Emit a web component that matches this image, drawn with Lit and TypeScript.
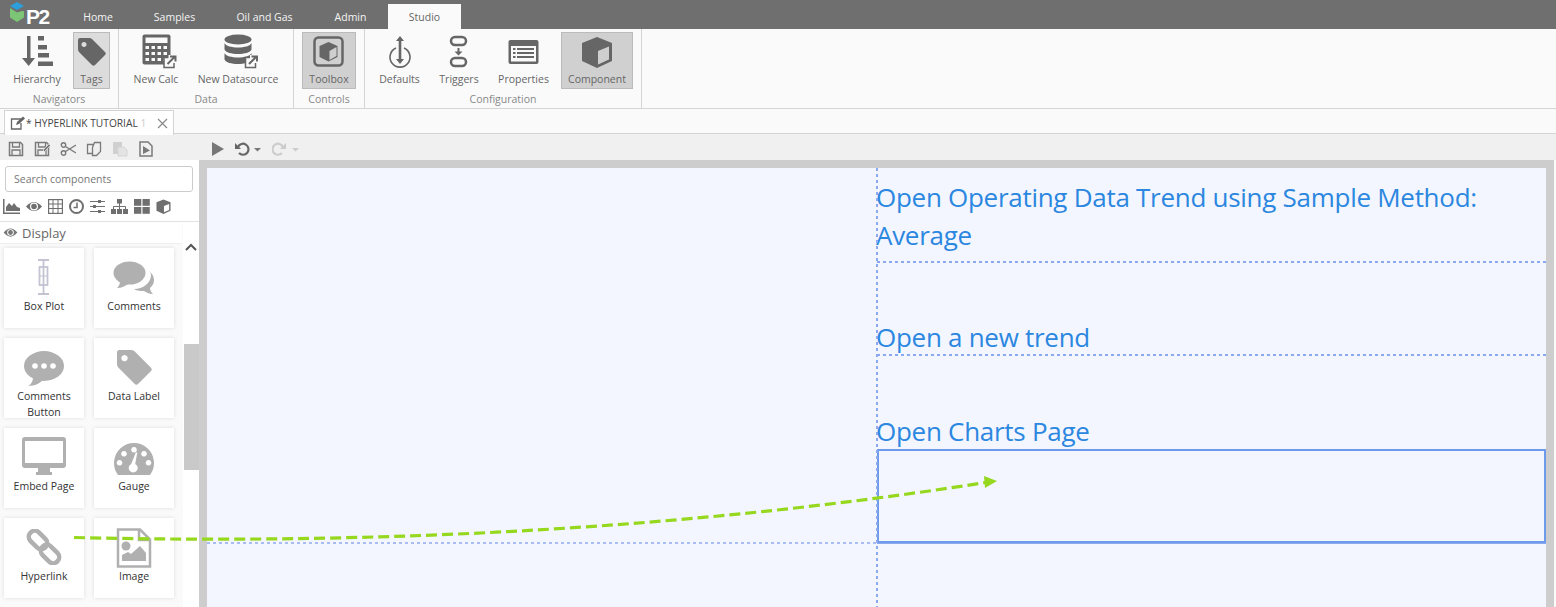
import { LitElement, html, css, svg } from "lit";
import { customElement } from "lit/decorators.js";

const I = (w: number, h: number, body: unknown, cls = "") =>
  html`<svg class=${cls} width=${w} height=${h} viewBox="0 0 ${w} ${h}">${body}</svg>`;

const G = "#666";
const R = "#b0b0b0";

const hierarchy = I(36, 34, svg`
  <path d="M8 1h3.500v22H16l-6.300 8-6.700-8H8z" fill="${G}"/>
  <rect x="19" y="1" width="6" height="4.500" fill="${G}"/><rect x="19" y="10" width="9" height="4.500" fill="${G}"/>
  <rect x="19" y="18" width="11" height="4.500" fill="${G}"/><rect x="19" y="26.500" width="15" height="4.500" fill="${G}"/>`);
const tag = (c: string, w = 28) => html`<svg width=${w} height=${w} viewBox="0 0 28 28">
  <path fill-rule="evenodd" fill="${c}" d="M2 0h9q2 0 3 1l13 13q1.500 1.500 0 3l-10 10q-1.500 1.500-3 0L1 14Q0 13 0 11V2q0-2 2-2zM6 4a2.500 2.500 0 1 0 .01 0z"/></svg>`;
const extLink = svg`
  <rect x="21.500" y="23.500" width="10" height="10" fill="#fafafa" stroke="${G}" stroke-width="1.500"/>
  <rect x="26" y="21" width="8" height="8" fill="#fafafa"/>
  <path d="M25 30l7-7M27.500 22.500h5.500v5" fill="none" stroke="${G}" stroke-width="2"/>`;
const calc = html`<svg width="42" height="35" viewBox="-7.500 0 42 35">
  <rect x="0" y="0.500" width="28" height="30" rx="2" fill="${G}"/>
  <rect x="3" y="3.500" width="22" height="5.500" fill="#fafafa"/>
  ${[12, 18, 24].map(y => [3, 9, 15, 21].map(x => svg`<rect x="${x}" y="${y}" width="3.500" height="3" fill="#fafafa"/>`))}
  ${extLink}</svg>`;
const db = html`<svg width="42" height="35" viewBox="-7 0 42 35">
  <ellipse cx="14" cy="5.500" rx="13.500" ry="5" fill="${G}"/>
  <path d="M0.500 9c2 6 25 6 27 0v6.500c-2 6-25 6-27 0zM0.500 19c2 6 25 6 27 0v6.500c-2 6-25 6-27 0z" fill="${G}"/>
  ${extLink}</svg>`;
const toolboxIco = I(32, 32, svg`
  <rect x="1.500" y="1.500" width="28" height="28" rx="4" fill="none" stroke="${G}" stroke-width="2.500"/>
  <path d="M15.500 6l9 4v11l-9 4.500-9-4.500V10z" fill="${G}"/>
  <path d="M16.500 15v9l7-4V11z" fill="#cfcfcf"/>`);
const defaults = I(24, 34, svg`
  <path d="M12 1l4 5h-2.700v18H16l-4 5-4-5h2.700V6H8z" fill="${G}"/>
  <path d="M8 13a10 10 0 1 0 8 0" fill="none" stroke="${G}" stroke-width="1.600"/>`);
const triggers = I(20, 34, svg`
  <rect x="2" y="2" width="15" height="8" rx="4" fill="none" stroke="${G}" stroke-width="2.500"/>
  <rect x="2" y="23" width="15" height="8" rx="4" fill="none" stroke="${G}" stroke-width="2.500"/>
  <path d="M8.500 13h2v3.500h3L9.500 20.500l-4-4h3z" fill="${G}"/>`);
const props = I(32, 26, svg`
  <rect x="0.500" y="1" width="30" height="24" rx="2" fill="${G}"/>
  <rect x="3" y="7" width="25" height="15.500" fill="#fafafa"/>
  ${[9, 13, 17].map(y => svg`<rect x="5" y="${y}" width="2.500" height="2" fill="${G}"/><rect x="9" y="${y}" width="17" height="2" fill="${G}"/>`)}`);
const cube = (c: string, face: string, s = 32) => html`<svg width=${s} height=${s} viewBox="0 0 32 32">
  <path d="M16 1l15 6v18l-15 7-15-7V7z" fill="${c}"/>
  <path d="M17 15l11-4.500v13L17 28.500z" fill="${face}"/></svg>`;

const btns = {
  nav: [
    { l: "Hierarchy", w: 66, i: hierarchy },
    { l: "Tags", w: 37, i: tag(G), a: "lite", m: 3 },
  ],
  data: [
    { l: "New Calc", w: 66, i: calc },
    { l: "New Datasource", w: 94, i: db, m: 2 },
  ],
  ctl: [{ l: "Toolbox", w: 54, i: toolboxIco, a: "active" }],
  cfg: [
    { l: "Defaults", w: 55, i: defaults },
    { l: "Triggers", w: 64, i: triggers },
    { l: "Properties", w: 65, i: props },
    { l: "Component", w: 72, i: cube(G, "#cfcfcf"), a: "active", m: 5 },
  ],
};

const T = "#7a7a7a";
const tool = (b: unknown) => I(16, 16, b);
const saveI = svg`<path d="M1.500 1.500h11l2 2v11h-13z" fill="none" stroke="${T}" stroke-width="1.500"/><path d="M4.500 2v4h7V2M4 14v-5h8v5" fill="none" stroke="${T}" stroke-width="1.300"/>`;
const leftTools = [
  tool(saveI),
  tool(svg`${saveI}<path d="M9 9l6-6 1.500 1.500-6 6z" fill="${T}" stroke="#f0f0f0" stroke-width=".6"/>`),
  tool(svg`<circle cx="3.500" cy="4" r="2.200" fill="none" stroke="${T}" stroke-width="1.400"/><circle cx="3.500" cy="12" r="2.200" fill="none" stroke="${T}" stroke-width="1.400"/><path d="M5.500 5.500L16 12M5.500 10.500L16 4" stroke="${T}" stroke-width="1.400"/>`),
  tool(svg`<path d="M1.500 3.500h7v9h-7z" fill="none" stroke="${T}" stroke-width="1.300"/><path d="M6.500 6.500l2-5h6v9l-4 4h-4z" fill="#f0f0f0" stroke="${T}" stroke-width="1.300"/>`),
  tool(svg`<path d="M1 1h9v12H1z" fill="#d0d0d0"/><path d="M6 6h6l3 3v6H6z" fill="#e4e4e4" stroke="#d4d4d4"/>`),
  tool(svg`<path d="M2 1h8l4 4v10H2z" fill="none" stroke="${T}" stroke-width="1.500"/><path d="M5 5l7 4.500L5 13z" fill="${T}"/>`),
];

const S = "#6f6f6f";
const sideIcons = [
  I(17, 15, svg`<path d="M0 0h1.500v13.500H19V15H0z" fill="${S}"/><path d="M3 12V8l3-4 3 3 2-3 3 4 3 1v3z" fill="${S}"/>`),
  I(16, 15, svg`<path d="M0 7.500Q8-1.500 16 7.500 8 16.500 0 7.500z" fill="${S}"/><circle cx="8" cy="7.500" r="4" fill="#fff"/><circle cx="8" cy="7.500" r="2.800" fill="${S}"/>`),
  I(15, 15, svg`<rect x=".6" y=".6" width="13.800" height="13.800" fill="none" stroke="${S}" stroke-width="1.200"/><path d="M0 5h15M0 9.500h15M5 0v15M10 0v15" stroke="${S}"/>`),
  I(15, 15, svg`<circle cx="7.500" cy="7.500" r="6.500" fill="none" stroke="${S}" stroke-width="2"/><path d="M8 3.500v5H4.500" fill="none" stroke="${S}" stroke-width="1.500"/>`),
  I(15, 15, svg`<path d="M0 2.500h15M0 7.500h15M0 12.500h15" stroke="${S}"/><rect x="8" y="1" width="3" height="3" fill="${S}"/><rect x="3" y="6" width="3" height="3" fill="${S}"/><rect x="8" y="11" width="3" height="3" fill="${S}"/>`),
  I(17, 15, svg`<rect x="6" y="0" width="5" height="4.500" fill="${S}"/><rect x="0" y="10" width="5" height="5" fill="${S}"/><rect x="6" y="10" width="5" height="5" fill="${S}"/><rect x="12" y="10" width="5" height="5" fill="${S}"/><path d="M8.500 4v6M2.500 10V7.500h12V10" fill="none" stroke="${S}"/>`),
  I(16, 15, svg`<rect x="0" y="0" width="7.300" height="6.800" fill="${S}"/><rect x="8.500" y="0" width="7.300" height="6.800" fill="${S}"/><rect x="0" y="8" width="7.300" height="6.800" fill="${S}"/><rect x="8.500" y="8" width="7.300" height="6.800" fill="${S}"/>`),
  html`<svg width="15" height="15" viewBox="0 0 32 32"><path d="M16 1l15 6v18l-15 7-15-7V7z" fill="${S}"/><path d="M17 15l11-4.500v13L17 28.500z" fill="#fff"/></svg>`,
];

const eye = (s = 15) => html`<svg width=${s} height=${Math.round(s * 0.75)} viewBox="0 0 16 12"><path d="M0.500 6Q8-3 15.500 6 8 15 0.500 6z" fill="#777"/><circle cx="8" cy="6" r="3.600" fill="#fff"/><circle cx="8" cy="6" r="2.600" fill="#777"/></svg>`;

const cards = [
  { l: "Box Plot", i: html`<svg width="20" height="36" viewBox="0 0 20 36"><path d="M4 1h11M9.500 1v34M4 35h11" fill="none" stroke="#c3c3d2" stroke-width="1.800"/><rect x="5.500" y="8" width="8" height="18" fill="none" stroke="#c3c3d2" stroke-width="1.800"/><path d="M5 17h9" stroke="#c3c3d2"/></svg>` },
  { l: "Comments", i: html`<svg width="42" height="34" viewBox="0 0 42 34"><path d="M30 7c7 2 11 7 11 12 0 4-2 6-4 8 0 2 1 4 3 6-4 0-7-2-9-3-3 0-7 0-10-2 9 0 17-6 17-14 0-2-1-5-8-7z" fill="${R}"/><ellipse cx="16.500" cy="12" rx="16" ry="11.500" fill="${R}"/><path d="M7 20c0 3-1 5-3 7 5 0 8-2 11-4z" fill="${R}"/></svg>` },
  { l: "Comments Button", o: "low2", i: html`<svg width="40" height="36" viewBox="0 0 40 36"><ellipse cx="20" cy="15" rx="20" ry="15" fill="${R}"/><path d="M9 26c0 3-1 7-5 9 7 0 12-3 15-6z" fill="${R}"/><circle cx="11" cy="15" r="2.800" fill="#fff"/><circle cx="20" cy="15" r="2.800" fill="#fff"/><circle cx="29" cy="15" r="2.800" fill="#fff"/></svg>` },
  { l: "Data Label", i: tag(R, 35) },
  { l: "Embed Page", i: html`<svg width="44" height="38" viewBox="0 0 44 38"><path d="M3 0h38q3 0 3 3v25q0 3-3 3H3q-3 0-3-3V3q0-3 3-3zM3 4v22h38V4z" fill-rule="evenodd" fill="${R}"/><path d="M16 31h12v4h2v3H14v-3h2z" fill="${R}"/></svg>` },
  { l: "Gauge", i: html`<svg width="40" height="32" viewBox="0 0 40 32"><path fill-rule="evenodd" fill="${R}" d="M4 32A20 20 0 1 1 36 32zM20 4a2.800 2.800 0 1 0 .01 0zM10 8a2.800 2.800 0 1 0 .01 0zM30 8a2.800 2.800 0 1 0 .01 0zM5.500 17a2.800 2.800 0 1 0 .01 0zM34.500 17a2.800 2.800 0 1 0 .01 0z"/><path d="M22 9l1.200 1-2 11a4.500 4.500 0 1 1-4 0z" fill="#fff"/><circle cx="19" cy="25" r="3.500" fill="#fff"/></svg>` },
  { l: "Hyperlink", i: html`<svg width="38" height="36" viewBox="0 0 38 36"><g fill="none" stroke="${R}" stroke-width="4.500"><rect x="2.500" y="5" width="21" height="12" rx="6" transform="rotate(45 13 11)"/><rect x="14.500" y="19" width="21" height="12" rx="6" transform="rotate(45 25 25)"/></g></svg>` },
  { l: "Image", o: "low3", i: html`<svg width="36" height="40" viewBox="0 0 36 40"><path d="M2 1.500h22l10 10V38.500H2z" fill="#fff" stroke="${R}" stroke-width="2.500"/><path d="M23 2v10h11" fill="none" stroke="${R}" stroke-width="2.500"/><circle cx="10" cy="18" r="4.500" fill="${R}"/><path d="M6 33v-6l6-3 3 2 9-8 6 7v8z" fill="${R}"/></svg>` },
];

const dotH = (c: string) => `repeating-linear-gradient(90deg, ${c} 0 3px, transparent 3px 6px)`;

@customElement("app-root")
export class AppRoot extends LitElement {
  static styles = css`
    :host { display: block; width: 1556px; height: 607px; overflow: hidden; position: relative;
      font-family: "Open Sans", "Noto Sans", sans-serif; background: #fafafa; color: #555; }
    .top { height: 29px; background: #6f6f6f; display: flex; align-items: flex-end; box-sizing: border-box; }
    .logo { width: 63px; height: 29px; display: flex; align-items: center; padding-left: 9px; box-sizing: border-box; color: #fff; font: bold 21px/1 "Liberation Sans", sans-serif; letter-spacing: -1.5px; }
    .logo svg { margin-right: 0; margin-top: -5px; }
    .logo span { margin-top: 3px; }
    .nav { display: flex; height: 25px; }
    .nav div { font-size: 10.5px; color: #f4f4f4; line-height: 27px; text-align: center; }
    .nav .on { background: #fafafa; color: #666; }
    .ribbon { height: 79px; display: flex; background: #fafafa; }
    .group { display: flex; flex-direction: column; border-right: 1px solid #d4d4d4; box-sizing: border-box; }
    .row { display: flex; height: 60px; padding-top: 3px; box-sizing: border-box; }
    .caption { font-size: 10.5px; color: #888; text-align: center; height: 19px; line-height: 20px; }
    .btn { height: 57px; display: flex; flex-direction: column; align-items: center; box-sizing: border-box; font-size: 10.5px; color: #666; border: 1px solid transparent; white-space: nowrap; }
    .btn.active { background: #d0d0d0; border-color: #bbb; }
    .btn.lite { background: #dcdcdc; border-color: #bbb; }
    .btn .ic { height: 37px; flex: none; display: flex; align-items: center; justify-content: center; }
    .btn .t { line-height: 18px; flex: none; }
    .tabs { height: 26px; border-top: 1px solid #d4d4d4; border-bottom: 1px solid #d4d4d4; box-sizing: border-box; padding-left: 4px; display: flex; background: #fafafa; }
    .tab { width: 170px; height: 25px; margin-top: 1px; background: #fff; border: 1px solid #d4d4d4; border-bottom: 0; box-sizing: border-box; display: flex; align-items: center; padding-left: 5px; font-size: 10.2px; color: #444; white-space: nowrap; }
    .tab .name { width: 125px; overflow: hidden; margin-top: -1px; }
    .tab .name i { font-style: normal; color: #ccc; }
    .tab .x { margin-left: 6px; display: flex; }
    .toolbar { height: 26px; background: #f0f0f0; display: flex; align-items: center; padding: 4px 0 0 8px; box-sizing: border-box; gap: 10px; }
    .toolbar .spacer { width: 37px; }
    .main { display: flex; height: 447px; }
    .side { width: 199px; background: #fff; flex: none; display: flex; flex-direction: column; }
    .search { margin: 6px 6px 0 5px; height: 26px; border: 1px solid #ccc; border-radius: 3px; box-sizing: border-box; font-size: 10.5px; color: #777; line-height: 24px; padding-left: 8px; }
    .icons { display: flex; align-items: center; gap: 6px; height: 29px; padding-left: 3px; border-bottom: 1px solid #e2e2e2; box-shadow: 0 1px 1px #eee; flex: none; }
    .lower { flex: 1; display: flex; min-height: 0; }
    .list { width: 183px; flex: none; display: flex; flex-direction: column; background: #fafafa; }
    .head { height: 22px; width: 182px; flex: none; background: #fff; border-bottom: 1px solid #eee; display: flex; align-items: center; gap: 4px; padding-left: 3px; box-sizing: border-box; font-size: 13px; color: #666; }
    .grid { display: grid; grid-template-columns: 80px 80px; gap: 10px; padding: 4px 0 0 4px; }
    .card { height: 80px; background: #fff; box-shadow: 0 0 4px rgba(0,0,0,.12); display: flex; flex-direction: column; align-items: center; font-size: 10.5px; color: #333; text-align: center; line-height: 16px; }
    .card .ci { height: 50px; flex: none; display: flex; align-items: flex-end; justify-content: center; padding-bottom: 3px; box-sizing: border-box; }
    .ci.low2 svg { transform: translateY(2px); }
    .ci.low3 svg { transform: translateY(3px); }
    .bar { width: 16px; flex: none; background: #fff; display: flex; flex-direction: column; align-items: center; }
    .bar .arrow { height: 20px; margin-top: 15px; }
    .thumb { width: 15px; height: 126px; background: #c9c9c9; margin-top: 87px; }
    .frame { flex: 1; background: #cdcdcd; padding: 8px 8px 0; margin-right: 2px; min-width: 0; }
    .canvas { height: 100%; background: #f3f6ff; display: grid; grid-template-columns: 670px 1fr; grid-template-rows: 95px 93px 93px 94px 1fr; }
    .l { grid-column: 1; grid-row: 1 / span 4; margin-bottom: -1px; background-position: left bottom; background-size: 100% 2px; background-repeat: no-repeat; }
    .vline { grid-column: 2; grid-row: 1 / span 5; margin-left: -1px; width: 2px; background: repeating-linear-gradient(180deg, #8aa9f0 0 3px, transparent 3px 6px); pointer-events: none; }
    .cell { grid-column: 2; box-sizing: border-box; font-size: 26px; line-height: 38px; letter-spacing: -0.28px; color: #2b87e0; background-position: left bottom; background-size: 100% 2px; background-repeat: no-repeat; }
    .cell span { display: block; margin-left: -1px; }
    .c1 { grid-row: 1; padding-top: 10px; }
    .c2 { grid-row: 2; padding-top: 55px; }
    .c3 { grid-row: 3; padding-top: 56px; background: none; }
    .sel { grid-row: 4; border: 2px solid #6d9bea; box-shadow: 0 1px 0 #8aa9f0; }
    .ink { position: absolute; left: 0; top: 0; pointer-events: none; }
  `;

  private group(items: any[], width: number, pad: number, cap: string) {
    return html`<div class="group" style="width:${width}px">
      <div class="row" style="padding-left:${pad}px">
        ${items.map(b => html`<div class="btn ${b.a || ""}" style="width:${b.w}px;margin-left:${b.m || 0}px"><div class="ic">${b.i}</div><div class="t">${b.l}</div></div>`)}
      </div>
      <div class="caption">${cap}</div>
    </div>`;
  }

  render() {
    return html`
      <div class="top">
        <div class="logo">
          <svg width="17" height="20" viewBox="0 0 17 20"><path d="M8 0l7 4-7 4-7-4z" fill="#2d9fdc"/><path d="M1 6l7 4.500 7-2v7l-7 4.500-7-4.500z" fill="#7cc576"/><path d="M11 8l6-3v5z" fill="#6f6f6f"/></svg><span>P2</span>
        </div>
        <div class="nav">
          <div style="width:70px">Home</div>
          <div style="width:83px">Samples</div>
          <div style="width:97px">Oil and Gas</div>
          <div style="width:75px">Admin</div>
          <div class="on" style="width:73px">Studio</div>
        </div>
      </div>
      <div class="ribbon">
        ${this.group(btns.nav, 119, 4, "Navigators")}
        ${this.group(btns.data, 175, 4, "Data")}
        ${this.group(btns.ctl, 71, 8, "Controls")}
        ${this.group(btns.cfg, 277, 7, "Configuration")}
      </div>
      <div class="tabs">
        <div class="tab">
          <svg width="16" height="14" viewBox="0 0 16 14"><path d="M11 3H1.500v10H11V7" fill="none" stroke="#666" stroke-width="1.300"/><path d="M6 9l1-3 6-5.500 2 2-6 5.500z" fill="#666"/></svg>
          <div class="name">* HYPERLINK TUTORIAL <i>1</i></div>
          <div class="x"><svg width="11" height="11" viewBox="0 0 11 11"><path d="M1 1l9 9M10 1l-9 9" stroke="#888" stroke-width="1.200"/></svg></div>
        </div>
      </div>
      <div class="toolbar">
        ${leftTools}
        <div class="spacer"></div>
        <svg width="13" height="14" viewBox="0 0 13 14"><path d="M1 0l12 7-12 7z" fill="#777"/></svg>
        <svg width="28" height="14" viewBox="0 0 28 14"><path d="M4 5a5.500 5.500 0 1 1 1 6" fill="none" stroke="#666" stroke-width="2.200"/><path d="M1 1v6h6z" fill="#666"/><path d="M20 6h7l-3.500 3.500z" fill="#777"/></svg>
        <svg width="28" height="14" viewBox="0 0 28 14"><path d="M11 5a5.500 5.500 0 1 0-1 6" fill="none" stroke="#ccc" stroke-width="2.200"/><path d="M14 1v6H8z" fill="#ccc"/><path d="M20 6h7l-3.500 3.500z" fill="#ccc"/></svg>
      </div>
      <div class="main">
        <div class="side">
          <div class="search">Search components</div>
          <div class="icons">${sideIcons}</div>
          <div class="lower">
            <div class="list">
              <div class="head">${eye()}<span>Display</span></div>
              <div class="grid">
                ${cards.map(c => html`<div class="card"><div class="ci ${c.o || ""}">${c.i}</div><div>${c.l}</div></div>`)}
              </div>
            </div>
            <div class="bar">
              <svg class="arrow" width="12" height="8" viewBox="0 0 12 8"><path d="M1 7l5-5 5 5" fill="none" stroke="#555" stroke-width="2"/></svg>
              <div class="thumb"></div>
            </div>
          </div>
        </div>
        <div class="frame">
          <div class="canvas">
            <div class="l" style="background-image:${dotH("#aabdf2")}"></div>
            <div class="cell c1" style="background-image:${dotH("#8aa9f0")}"><span>Open Operating Data Trend using Sample Method: Average</span></div>
            <div class="cell c2" style="background-image:${dotH("#8aa9f0")}"><span>Open a new trend</span></div>
            <div class="cell c3"><span>Open Charts Page</span></div>
            <div class="cell sel"></div>
            <div class="vline"></div>
          </div>
        </div>
      </div>
      <svg class="ink" width="1556" height="607" viewBox="0 0 1556 607">
        <path d="M74 537.500C400 545 700 527 986 482.500" fill="none" stroke="#96d81e" stroke-width="3.200" stroke-dasharray="11 5"/>
        <path d="M984 476l13 5-12 7z" fill="#96d81e"/>
      </svg>
    `;
  }
}
